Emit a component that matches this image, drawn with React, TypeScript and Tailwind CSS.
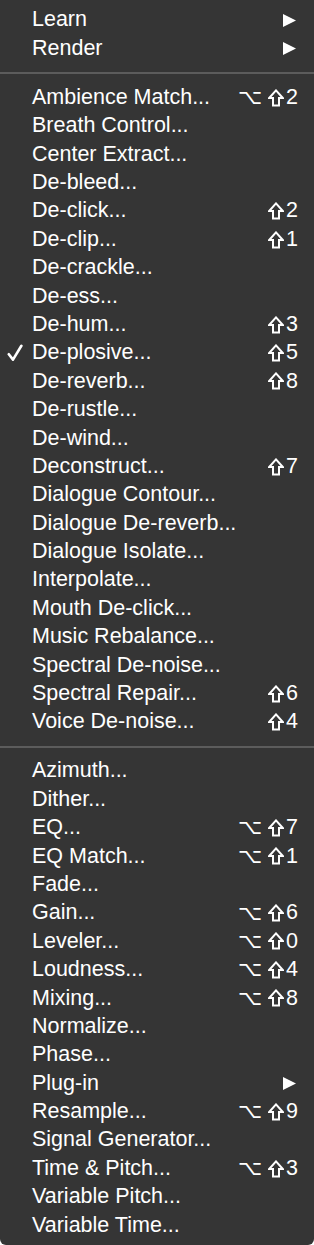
type Item = { label: string; shortcut?: string; submenu?: boolean; checked?: boolean };

const top: Item[] = [
  { label: "Learn", submenu: true },
  { label: "Render", submenu: true },
];

const repair: Item[] = [
  { label: "Ambience Match...", shortcut: "⌥⇧2" },
  { label: "Breath Control..." },
  { label: "Center Extract..." },
  { label: "De-bleed..." },
  { label: "De-click...", shortcut: "⇧2" },
  { label: "De-clip...", shortcut: "⇧1" },
  { label: "De-crackle..." },
  { label: "De-ess..." },
  { label: "De-hum...", shortcut: "⇧3" },
  { label: "De-plosive...", shortcut: "⇧5", checked: true },
  { label: "De-reverb...", shortcut: "⇧8" },
  { label: "De-rustle..." },
  { label: "De-wind..." },
  { label: "Deconstruct...", shortcut: "⇧7" },
  { label: "Dialogue Contour..." },
  { label: "Dialogue De-reverb..." },
  { label: "Dialogue Isolate..." },
  { label: "Interpolate..." },
  { label: "Mouth De-click..." },
  { label: "Music Rebalance..." },
  { label: "Spectral De-noise..." },
  { label: "Spectral Repair...", shortcut: "⇧6" },
  { label: "Voice De-noise...", shortcut: "⇧4" },
];

const utility: Item[] = [
  { label: "Azimuth..." },
  { label: "Dither..." },
  { label: "EQ...", shortcut: "⌥⇧7" },
  { label: "EQ Match...", shortcut: "⌥⇧1" },
  { label: "Fade..." },
  { label: "Gain...", shortcut: "⌥⇧6" },
  { label: "Leveler...", shortcut: "⌥⇧0" },
  { label: "Loudness...", shortcut: "⌥⇧4" },
  { label: "Mixing...", shortcut: "⌥⇧8" },
  { label: "Normalize..." },
  { label: "Phase..." },
  { label: "Plug-in", submenu: true },
  { label: "Resample...", shortcut: "⌥⇧9" },
  { label: "Signal Generator..." },
  { label: "Time & Pitch...", shortcut: "⌥⇧3" },
  { label: "Variable Pitch..." },
  { label: "Variable Time..." },
];

// shift key symbol, outlined arrow
function ShiftIcon() {
  return (
    <svg width="16" height="18" viewBox="0 0 16 18" className="mr-[2px]">
      <path
        d="M8 1.4 L14.8 9 L11 9 L11 16.6 L5 16.6 L5 9 L1.2 9 Z"
        fill="none"
        stroke="#ffffff"
        strokeWidth="2"
        strokeLinejoin="miter"
      />
    </svg>
  );
}

function CheckIcon() {
  return (
    <svg width="16" height="18" viewBox="0 0 16 18">
      <path
        d="M1.8 10.2 L6 15.6 L14.4 1.8"
        fill="none"
        stroke="#ffffff"
        strokeWidth="2.6"
        strokeLinecap="round"
        strokeLinejoin="round"
      />
    </svg>
  );
}

function Shortcut({ keys }: { keys: string }) {
  const chars = Array.from(keys);
  return (
    <div className="flex items-center whitespace-nowrap">
      {chars.map((c, i) =>
        c === "⌥" ? (
          <span key={i} className="font-['DejaVu_Sans',sans-serif] text-[21px] mr-[6px]">⌥</span>
        ) : c === "⇧" ? (
          <ShiftIcon key={i} />
        ) : (
          <span key={i}>{c}</span>
        )
      )}
    </div>
  );
}

function Row({ item }: { item: Item }) {
  return (
    <div className="flex items-center h-[28.4px] pr-4">
      <div className="w-8 shrink-0 flex justify-center pr-[2px]">
        {item.checked && <CheckIcon />}
      </div>
      <div className="flex-1 whitespace-nowrap">{item.label}</div>
      {item.shortcut && <Shortcut keys={item.shortcut} />}
      {item.submenu && (
        <svg width="15" height="15" viewBox="0 0 15 15" className="mr-[1px]">
          <path d="M1 1 L14 7.5 L1 14 Z" fill="#ffffff" />
        </svg>
      )}
    </div>
  );
}

function Separator() {
  return (
    <div className="h-[20.6px] flex items-center">
      <div className="h-[2px] w-full bg-[#5c5c5c]" />
    </div>
  );
}

export default function App() {
  return (
    <div className="w-[314px] h-[1245px] bg-white">
      <div className="w-full h-full bg-[#353535] rounded-b-[6px] pt-[6px] text-white text-[21.5px] leading-none font-['Liberation_Sans',Arial,sans-serif]">
        {top.map((item) => (
          <Row key={item.label} item={item} />
        ))}
        <Separator />
        {repair.map((item) => (
          <Row key={item.label} item={item} />
        ))}
        <Separator />
        {utility.map((item) => (
          <Row key={item.label} item={item} />
        ))}
      </div>
    </div>
  );
}
